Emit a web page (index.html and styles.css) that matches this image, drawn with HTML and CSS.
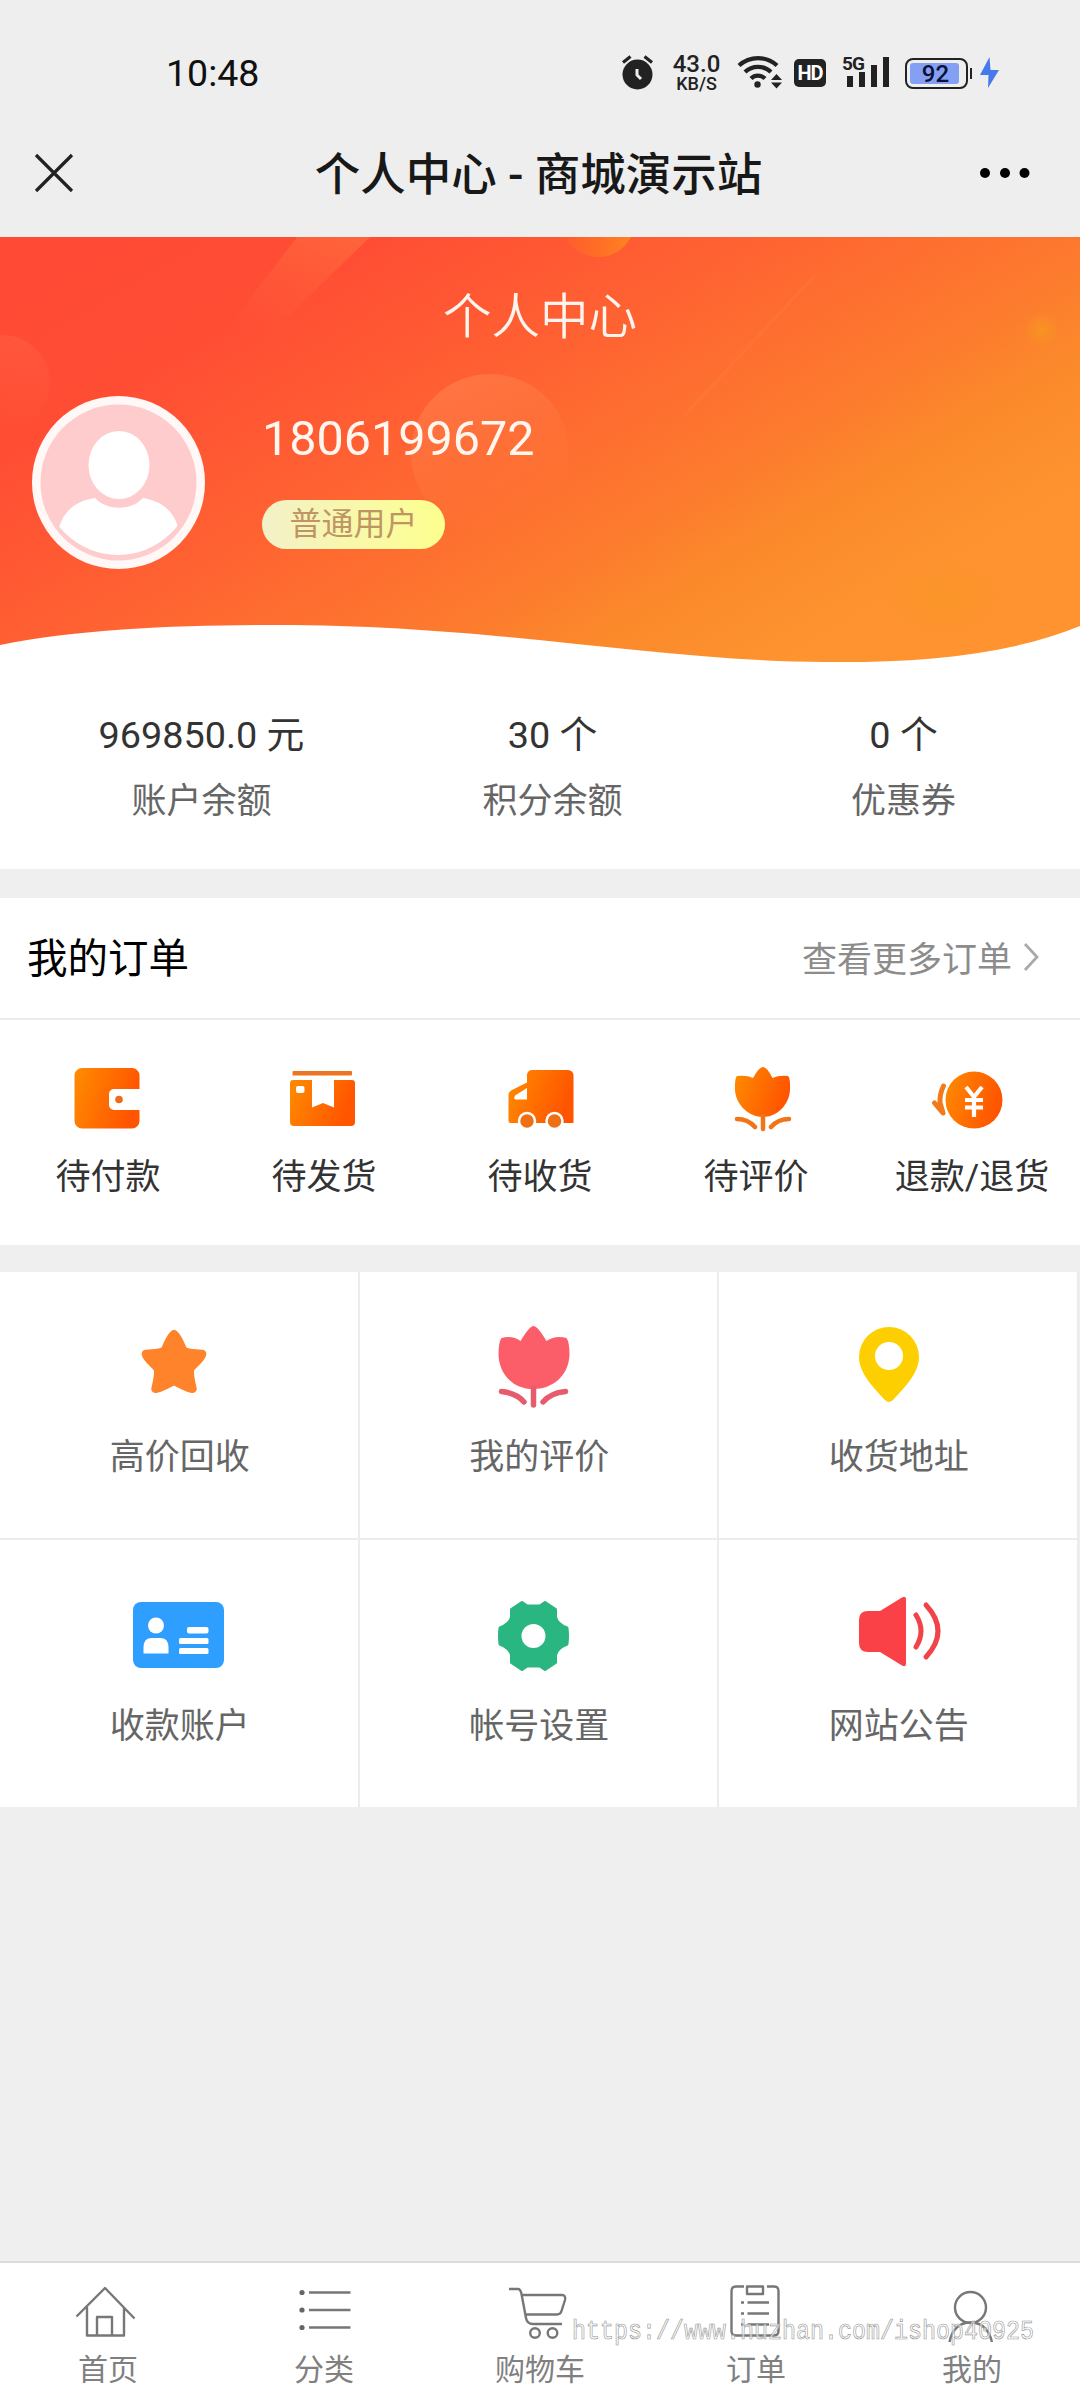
FILE: index.html
```html
<!DOCTYPE html>
<html lang="zh-CN">
<head>
<meta charset="utf-8">
<title>个人中心 - 商城演示站</title>
<link rel="stylesheet" href="styles.css">
</head>
<body>
<div class="page">
  <div class="status">
    <span class="clock">10:48</span>
    <div class="indicators">
      <svg width="34" height="40" viewBox="620.500 53 34 40"><circle cx="638" cy="74.500" r="15" fill="#222"/><path d="M623.500 62.500l7.500-6M652.500 62.500l-7.500-6" stroke="#222" stroke-width="3.200" fill="none"/><path d="M637.500 69v6l4 4" stroke="#eee" stroke-width="3" fill="none"/></svg>
      <div class="speed"><b>43.0</b><span>KB/S</span></div>
      <svg class="wifi" width="46" height="40" viewBox="737 53 46 40"><g fill="none" stroke="#222" stroke-width="4.300"><path d="M739 65.500a28 28 0 0 1 38 0"/><path d="M745 72a19 19 0 0 1 26 0"/><path d="M751 78.500a10 10 0 0 1 14 0"/></g><circle cx="757.500" cy="84.500" r="3.200" fill="#222"/><path d="M771 80l5.500-6 5.500 6zM771 82.500l5.500 6 5.500-6z" fill="#222"/></svg>
      <span class="hd">HD</span>
      <svg class="signal" width="49" height="40" viewBox="841 53 49 40"><g fill="#222"><text x="842" y="69.500" class="net">5G</text><rect x="847" y="76" width="6" height="11"/><rect x="859" y="72" width="6" height="15"/><rect x="871" y="65" width="6" height="22"/><rect x="883" y="57" width="6" height="30"/></g></svg>
      <span class="battery"><span class="level">92</span></span>
      <svg class="bolt" width="22" height="34" viewBox="979 56 22 34"><path d="M989.500 57L980 75h8.500l-.5 13L999 70h-8.500z" fill="#4678ee"/></svg>
    </div>
  </div>
  <div class="nav">
    <svg width="40" height="40" viewBox="0 0 40 40"><path d="M2 1l36 36M38 1L2 37" stroke="#222" stroke-width="3.200"/></svg>
    <h1>个人中心 - 商城演示站</h1>
    <svg width="52" height="14" viewBox="0 0 52 14"><circle cx="6" cy="6" r="5"/><circle cx="26" cy="6" r="5"/><circle cx="45.500" cy="6" r="5"/></svg>
  </div>

  <div class="hero">
    <svg class="hero-art" width="1080" height="430" viewBox="0 237 1080 430">
      <defs>
        <linearGradient id="sky" gradientUnits="userSpaceOnUse" x1="0" y1="237" x2="386" y2="893"><stop offset="0" stop-color="#ff4a35"/><stop offset=".25" stop-color="#ff4d34"/><stop offset=".48" stop-color="#ff6032"/><stop offset=".74" stop-color="#fd7a2e"/><stop offset=".86" stop-color="#fb8a2b"/><stop offset="1" stop-color="#fe932f"/></linearGradient>
        <linearGradient id="beam" x1=".8" y1="0" x2=".2" y2="1"><stop offset="0" stop-color="#ff7540" stop-opacity=".55"/><stop offset="1" stop-color="#ff6a40" stop-opacity="0"/></linearGradient>
        <linearGradient id="orb" x1="0" y1="0" x2=".5" y2="1"><stop offset="0" stop-color="#ff8a58" stop-opacity=".6"/><stop offset="1" stop-color="#ff8040" stop-opacity="0"/></linearGradient>
        <linearGradient id="side" x1="0" y1="0" x2="0" y2="1"><stop offset="0" stop-color="#ff7050" stop-opacity=".3"/><stop offset="1" stop-color="#ff7040" stop-opacity="0"/></linearGradient>
        <radialGradient id="glow"><stop offset="0" stop-color="#f79820" stop-opacity=".8"/><stop offset="1" stop-color="#f79820" stop-opacity="0"/></radialGradient>
        <linearGradient id="ball"><stop offset="0" stop-color="#ff5a2c"/><stop offset="1" stop-color="#ff8222"/></linearGradient>
      </defs>
      <path fill="url(#sky)" d="M0 237H1080V626C1010 655 920 663 825 662C650 661 500 625 275 625C180 625 80 629 0 645Z"/>
      <path fill="url(#beam)" d="M297 237H370L270 334L226 330Z"/>
      <circle cx="490" cy="453" r="79" fill="url(#orb)"/>
      <circle cx="2" cy="383" r="48" fill="url(#side)"/>
      <path d="M563 237H631C622 253 608 258 594 257C580 254 570 247 563 237Z" fill="url(#ball)"/>
      <circle cx="1042" cy="330" r="18" fill="url(#glow)"/>
      <ellipse cx="943" cy="597" rx="55" ry="34" fill="url(#glow)" opacity=".6"/>
      <path d="M815 275L685 415" stroke="#ff8a50" stroke-width="3" opacity=".2"/>
    </svg>
    <h2>个人中心</h2>
    <div class="profile">
      <svg class="avatar" width="174" height="174" viewBox="0 0 174 174"><defs><clipPath id="face"><circle cx="87" cy="84" r="75"/></clipPath></defs><circle cx="87.500" cy="86.500" r="86.500" fill="#fff8f6"/><circle cx="87.500" cy="86.500" r="78" fill="#ffcccd"/><g clip-path="url(#face)" fill="#fff"><ellipse cx="88" cy="69" rx="30.500" ry="34"/><path d="M28 131C34 113 46 105 64 102C76 115 100 115 112 102C130 105 142 114 147 131V174H28Z"/></g></svg>
      <div class="who"><div class="name">1806199672</div><span class="level-tag">普通用户</span></div>
    </div>
  </div>
  <div class="stats">
    <div><strong>969850.0 元</strong><span>账户余额</span></div>
    <div><strong>30 个</strong><span>积分余额</span></div>
    <div><strong>0 个</strong><span>优惠券</span></div>
  </div>

  <div class="orders">
    <div class="orders-head"><h3>我的订单</h3><a>查看更多订单<svg width="16" height="28" viewBox="0 0 16 28"><path d="M2 2l12 13L2 28" fill="none" stroke="#aaa" stroke-width="2.800"/></svg></a></div>
    <div class="orders-list">
      <div>
        <svg width="84" height="76" viewBox="66 1060 84 76"><defs><linearGradient id="fire" gradientUnits="objectBoundingBox" x1="0" y1="0" x2="1" y2=".3"><stop offset="0" stop-color="#ff8c00"/><stop offset="1" stop-color="#ff5500"/></linearGradient></defs><path fill="url(#fire)" d="M82 1068H132a7.500 7.500 0 0 1 7.500 7.500V1089H114a5 5 0 0 0-5 5v11a5 5 0 0 0 5 5h25.500v11a7.500 7.500 0 0 1-7.500 7.500H82a7.500 7.500 0 0 1-7.500-7.500v-45.500a7.500 7.500 0 0 1 7.500-7.500z"/><circle cx="119" cy="1099.500" r="3.800" fill="#ee6a1c"/></svg>
        <span>待付款</span></div>
      <div>
        <svg width="84" height="76" viewBox="282 1060 84 76"><rect x="292.500" y="1071" width="59.500" height="4.500" rx="1" fill="#ec7424"/><path fill="url(#fire)" fill-rule="evenodd" d="M293 1080H312V1107.500L323 1103L334 1107.500V1080H352a3 3 0 0 1 3 3V1122a4 4 0 0 1-4 4H294a4 4 0 0 1-4-4V1083a3 3 0 0 1 3-3zM298 1086a2 2 0 0 0-2 2v3a2 2 0 0 0 2 2h4.500a2 2 0 0 0 2-2v-3a2 2 0 0 0-2-2z"/></svg>
        <span>待发货</span></div>
      <div>
        <svg width="84" height="76" viewBox="498 1060 84 76"><path fill="url(#fire)" fill-rule="evenodd" d="M532 1070H568a5.500 5.500 0 0 1 5.500 5.500V1123H511a2.500 2.500 0 0 1-2.500-2.500V1095Q508.500 1092 511 1090.500L527 1082.500V1075a5 5 0 0 1 5-5zM527 1088L515 1095.500Q513 1099.500 516 1099.500H527Z"/><g fill="#ee6f15" stroke="#fff" stroke-width="2.500"><circle cx="527" cy="1121" r="8"/><circle cx="554.500" cy="1121" r="8"/></g></svg>
        <span>待收货</span></div>
      <div>
        <svg width="84" height="76" viewBox="714 1060 84 76"><path fill="url(#fire)" d="M763 1067Q767 1067 772.500 1078Q779 1075 788 1076Q790.500 1078 790 1090C789 1106 776 1117 763 1117C750 1117 736 1106 735 1090Q734.500 1078 737 1076Q747 1075 753 1078Q759 1067 763 1067Z"/><g stroke="#f27418" stroke-width="4.500" fill="none" stroke-linecap="round"><path d="M763 1116V1129M737 1119Q748 1119 755 1127M789 1119Q778 1119 771 1127"/></g></svg>
        <span>待评价</span></div>
      <div>
        <svg width="84" height="76" viewBox="930 1060 84 76"><circle cx="974" cy="1100" r="28.500" fill="url(#fire)"/><path d="M966 1087l8 10 8-10M974 1097v20M965 1100h18M965 1107.500h18" fill="none" stroke="#fff" stroke-width="4.200"/><path d="M943.500 1086Q939.500 1094 940 1103L943 1113L934.500 1103" fill="none" stroke="#f27a1a" stroke-width="5" stroke-linecap="round" stroke-linejoin="round"/></svg>
        <span>退款/退货</span></div>
    </div>
  </div>

  <div class="menu">
    <div><svg width="100" height="90" viewBox="130.500 1320 100 90"><path d="M174.500 1333Q178 1334 184 1349Q186 1352 203 1353Q206 1355 192 1368Q190 1372 194 1389Q193 1392 174.500 1382Q156 1392 155 1389Q159 1372 157 1368Q143 1355 146 1353Q163 1352 165 1349Q171 1334 174.500 1333Z" fill="#fe832b" stroke="#fe832b" stroke-width="6.500" stroke-linejoin="round"/></svg><span>高价回收</span></div>
    <div><svg width="100" height="90" viewBox="489.500 1320 100 90"><path fill="#fb5e69" d="M534 1326Q538 1326 547 1341Q556 1335 567 1338Q570 1342 570 1355C569 1376 553 1389 534 1389C515 1389 500 1376 499 1355Q499 1342 502 1338Q513 1335 521 1341Q530 1326 534 1326Z"/><path d="M534 1388V1405M502 1391.500Q517 1393 524.500 1402M566 1391.500Q551 1393 543.500 1402" stroke="#e75c6c" stroke-width="5.500" fill="none" stroke-linecap="round"/></svg><span>我的评价</span></div>
    <div><svg width="100" height="90" viewBox="849 1320 100 90"><path fill="#fecf00" fill-rule="evenodd" d="M889 1327a30 30 0 0 1 30 30C919 1374 903 1389 893 1400Q889 1404 885 1400C875 1389 859 1374 859 1357a30 30 0 0 1 30-30zM889 1342a14 14 0 1 0 0 28a14 14 0 1 0 0-28z"/></svg><span>收货地址</span></div>
    <div><svg width="100" height="90" viewBox="130 1588 100 90"><rect x="133" y="1602" width="91" height="66" rx="8" fill="#2f9fff"/><g fill="#fff"><circle cx="156" cy="1625.500" r="8"/><path d="M143.500 1653.500V1648Q143.500 1638 151 1638H161Q168.500 1638 168.500 1648V1653.500Z"/><rect x="187" y="1627" width="21.500" height="6.500" rx="2"/><rect x="179" y="1638" width="29.500" height="6" rx="1.500"/><rect x="179" y="1648" width="29.500" height="6" rx="1.500"/></g></svg><span>收款账户</span></div>
    <div><svg width="100" height="90" viewBox="490 1588 100 90"><path fill="#2ab680" fill-rule="evenodd" stroke="#2ab680" stroke-width="3" stroke-linejoin="round" d="M523 1602.500L528 1606H541L546 1602.500L556.500 1609.500V1617Q558 1624 568 1628Q569 1636 568 1644Q558 1648 556.500 1655V1662.500L546 1669.500L541 1666H528L523 1669.500L512.500 1662.500V1655Q511 1648 501 1644Q500 1636 501 1628Q511 1624 512.500 1617V1609.500ZM534.500 1622.500a13.500 13.500 0 1 0 0 27a13.500 13.500 0 1 0 0-27z"/></svg><span>帐号设置</span></div>
    <div><svg width="100" height="90" viewBox="849 1588 100 90"><path d="M868 1611H880L902 1597.500Q906 1595 906 1600V1663Q906 1668 902 1665.500L880 1652H868Q859 1652 859 1643V1620Q859 1611 868 1611Z" fill="#f94147"/><path d="M916 1615Q926 1631 916 1647M926 1605Q950 1631 926 1657" fill="none" stroke="#f04449" stroke-width="5" stroke-linecap="round"/></svg><span>网站公告</span></div>
  </div>

  <div class="tabbar">
    <div><svg width="76" height="66" viewBox="70 2280 76 66"><path d="M76.500 2316.500L105 2288L134.500 2318.500M87 2307V2335.500H124V2308M97 2335V2317H112V2335"/></svg><span>首页</span></div>
    <div><svg width="76" height="66" viewBox="286 2280 76 66"><path d="M309 2292.500H350.500M309 2310H350.500M309 2327.500H350.500"/><g class="dots"><circle cx="302" cy="2292.500" r="2.600"/><circle cx="302" cy="2310" r="2.600"/><circle cx="302" cy="2327.500" r="2.600"/></g></svg><span>分类</span></div>
    <div><svg width="76" height="66" viewBox="502 2280 76 66"><path d="M509 2289H518Q520.500 2289 521.500 2294L526 2318Q527 2324 533 2324H562M522 2295H562Q566 2295 565 2300L561.500 2311Q560.500 2314.500 557 2314.500H526"/><circle cx="535" cy="2333" r="4.800"/><circle cx="552.500" cy="2333" r="4.800"/></svg><span>购物车</span></div>
    <div><svg width="76" height="66" viewBox="718 2280 76 66"><path d="M744 2286.500H736Q731.500 2286.500 731.500 2291V2331Q731.500 2335.500 736 2335.500H774Q778.500 2335.500 778.500 2331V2291Q778.500 2286.500 774 2286.500H767M747 2286.500H763V2294H747ZM741 2302.500H744M747.500 2302.500H769M741 2313.500H744M747.500 2313.500H769M741 2324.500H744M747.500 2324.500H769"/></svg><span>订单</span></div>
    <div><svg width="76" height="66" viewBox="934 2280 76 66"><circle cx="970.500" cy="2307.500" r="15.500"/><path d="M949.500 2342C952 2330 959 2322.500 970.500 2322.500C982 2322.500 989 2330 992 2342"/></svg><span>我的</span></div>
    <svg class="watermark" width="480" height="40" viewBox="0 0 480 40"><text x="4" y="26" textLength="462" lengthAdjust="spacingAndGlyphs">https://www.huzhan.com/ishop40925</text></svg>
  </div>
</div>
</body>
</html>
```
FILE: styles.css
```css
* { box-sizing: border-box; margin: 0; padding: 0; }
body { background: #efefef; color: #333; font-family: Roboto, "Noto Sans CJK SC", sans-serif; }
svg { display: block; flex: none; overflow: visible; }
h1, h2, h3 { font-weight: 400; }
.page { width: 1080px; height: 2400px; display: flex; flex-direction: column; overflow: hidden; }

.status { height: 110px; padding: 36px 79px 0 166px; background: #eee; display: flex; align-items: center; justify-content: space-between; }
.clock { font-size: 37.500px; color: #111; }
.indicators { display: flex; align-items: center; color: #222; }
.speed { width: 51px; margin: 0 15px 0 17px; display: flex; flex-direction: column; align-items: center; }
.speed b { font-size: 24px; font-weight: 500; line-height: 20px; }
.speed span { font-size: 18px; font-weight: 500; line-height: 19px; }
.hd { width: 32px; height: 28px; margin: 0 15px 0 11px; border-radius: 5px; background: #222; color: #fff; font-size: 20px; font-weight: 700; line-height: 29px; text-align: center; letter-spacing: -1px; }
.net { font-size: 19px; font-weight: 700; letter-spacing: -1px; }
.battery { position: relative; width: 63px; height: 31px; margin: 0 11px 0 15px; padding: 3px; border: 2px solid #222; border-radius: 8px; }
.battery::after { content: ""; position: absolute; right: -6px; top: 8px; width: 2px; height: 11px; background: #222; }
.level { display: block; width: 49px; height: 21px; border-radius: 3px; background: #84a0f4; color: #0b1136; font-size: 24px; font-weight: 500; line-height: 22px; text-align: center; padding-left: 2px; }

.nav { height: 127px; padding: 0 49px 0 34px; background: #eee; display: flex; align-items: center; justify-content: space-between; }
.nav h1 { margin-left: 24px; padding-top: 4px; font-size: 45.500px; font-weight: 500; color: #181818; line-height: 60px; }

.hero { position: relative; height: 430px; padding-top: 49px; background: #fff; color: #fff; }
.hero-art { position: absolute; left: 0; top: 0; }
.hero h2 { position: relative; font-size: 48.500px; line-height: 64px; text-align: center; font-weight: 350; color: #fff4ee; }
.profile { position: relative; display: flex; margin-top: 46px; padding-left: 31px; }
.who { margin: 14px 0 0 57px; }
.name { font-size: 48.500px; line-height: 58px; color: #fff6f0; }
.level-tag { display: block; width: 183px; height: 49px; margin-top: 32px; border-radius: 25px; background: linear-gradient(90deg, #f3f1c8, #fdff8e); color: #bf9563; font-size: 32px; line-height: 48px; text-align: center; }

.stats { height: 202px; padding: 43px 0 0 26px; background: #fff; display: grid; grid-template-columns: repeat(3, 351px); text-align: center; }
.stats strong, .stats span { display: block; line-height: 50px; font-size: 35px; }
.stats strong { font-size: 37.800px; font-weight: 400; }
.stats span { margin-top: 17px; color: #666; }

.orders { margin-top: 29px; background: #fff; }
.orders-head { height: 122px; padding: 0 41px 4px 27px; border-bottom: 2px solid #ececec; display: flex; align-items: center; justify-content: space-between; }
.orders-head h3 { padding-bottom: 2px; font-size: 40.500px; color: #000; }
.orders-head a { display: flex; align-items: center; gap: 11px; font-size: 35px; color: #8c8c8c; }
.orders-list { height: 225px; padding-top: 40px; display: grid; grid-template-columns: repeat(5, 216px); }
.orders-list div, .menu div, .tabbar div { display: flex; flex-direction: column; align-items: center; }
.orders-list span { margin-top: 17px; font-size: 35px; line-height: 50px; white-space: nowrap; }

.menu { margin-top: 27px; display: grid; grid-template-columns: repeat(3, 359.500px); grid-template-rows: 268px 267px; }
.menu div { padding: 48px 0 0 2px; background: #fff; border-right: 2px solid #ececec; border-bottom: 2px solid #ececec; }
.menu div:nth-child(n+4) { border-bottom: 0; }
.menu span { margin-top: 23px; font-size: 35px; line-height: 50px; color: #666; }
.menu div:nth-child(n+4) span { margin-top: 24px; }

.tabbar { position: relative; height: 139px; margin-top: auto; padding-top: 17px; border-top: 2px solid #dcdcdc; background: #fff; display: grid; grid-template-columns: repeat(5, 216px); }
.tabbar span { margin-top: 4px; font-size: 30px; line-height: 40px; color: #808080; }
.tabbar div svg { fill: none; stroke: #777; stroke-width: 2.400; stroke-linejoin: round; }
.tabbar div .dots { fill: #666; stroke: none; }
.watermark { position: absolute; left: 568px; top: 50px; }
.watermark text { font-family: "Liberation Mono", monospace; font-size: 27px; fill: #fff; fill-opacity: .6; stroke: #999; stroke-width: .7; }
```
